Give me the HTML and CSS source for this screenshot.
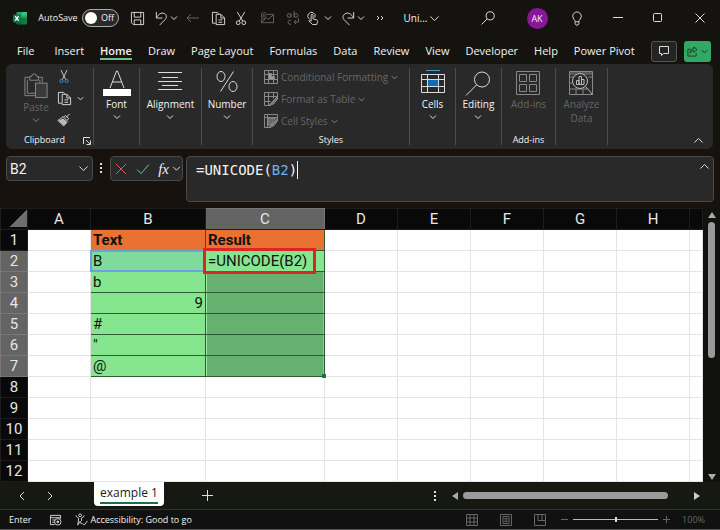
FILE: index.html
```html
<!DOCTYPE html>
<html lang="en">
<head>
  <meta charset="UTF-8">
  <meta name="viewport" content="width=device-width, initial-scale=1.0">
  <title>Uni... - Excel</title>
  <link rel="stylesheet" href="styles.css">
</head>
<body>

<!-- Shared icons -->
<svg class="sprite" aria-hidden="true">
  <symbol id="chev" viewBox="0 0 8 8"><path d="M1 2.500L4 5.500l3-3" vector-effect="non-scaling-stroke"/></symbol>
  <symbol id="copy" viewBox="0 0 16 16"><path d="M5 13H1.500V1.500H7l1.500 1.500M5.500 3.500h5l4 4v7h-9zM10.500 3.500v4h4M8 9.500h4M8 12h4"/></symbol>
  <symbol id="search" viewBox="0 0 26 26"><circle cx="17" cy="9" r="7.500" vector-effect="non-scaling-stroke"/><path d="M11.500 14.500L1 25" vector-effect="non-scaling-stroke"/></symbol>
</svg>

<header class="titlebar">
  <svg class="logo" viewBox="0 0 16 16" width="14" height="14" aria-hidden="true">
    <rect x="4" y="1" width="12" height="14" rx="1" fill="#21a366"/>
    <path d="M10 1h5a1 1 0 0 1 1 1v3h-6z" fill="#33c481"/>
    <path d="M4 8h6v7H5a1 1 0 0 1-1-1z" fill="#185c37"/>
    <path d="M10 8h6v6a1 1 0 0 1-1 1h-5z" fill="#107c41"/>
    <rect y="4" width="9" height="9" rx="1" fill="#107c41"/>
    <path d="M2.500 6l4 5M6.500 6l-4 5" stroke="#fff" stroke-width="1.500"/>
  </svg>
  <label class="autosave" for="autosave">AutoSave</label>
  <span class="toggle">
    <input type="checkbox" id="autosave">
    <span class="toggle-text">Off</span>
  </span>
  <button aria-label="Save"><svg class="icon" viewBox="0 0 16 16" width="15" height="15"><path d="M1.500 1.500h13v13h-11l-2-2zM4.500 1.500v5h7v-5M4.500 14.500v-5h7v5"/></svg></button>
  <button aria-label="Undo"><svg class="icon" viewBox="0 0 16 16" width="15" height="15"><path d="M2.500 1v6.500h6.500M2.500 7.500C5 3 8 1.500 10.500 2.500c3 1 3.500 4 1.500 6.500l-6 6"/></svg></button>
  <button aria-label="Undo list"><svg class="icon" width="8" height="8"><use href="#chev"/></svg></button>
  <button class="dim" aria-label="Back"><svg class="icon" viewBox="0 0 14 10" width="14" height="10"><path d="M13 5H1M5 1L1 5l4 4"/></svg></button>
  <button aria-label="Copy"><svg class="icon" width="15" height="15"><use href="#copy"/></svg></button>
  <button aria-label="Cut"><svg class="icon" viewBox="0 0 12 16" width="12" height="15"><path d="M2 1l6 10M10 1L4 11"/><circle cx="3" cy="12.500" r="2"/><circle cx="9" cy="12.500" r="2"/></svg></button>
  <button class="dim" aria-label="Email"><svg class="icon" viewBox="0 0 16 14" width="15" height="13"><path d="M7 2.500h7.500v9H1.500V8M6.500 6l2 2 6-5M1.500 11.500L6 7"/><path d="M3.500 2v3.500M1.500 1.500v4a2 2 0 0 0 4 0v-4a1.500 1.500 0 0 0-3 0"/></svg></button>
  <button class="dim" aria-label="Replace"><svg class="icon" viewBox="0 0 14 15" width="14" height="15"><circle cx="3" cy="4.500" r="1.800"/><path d="M5 2.500v4M8 0v6.500M5 9.500a2 2 0 1 0 0 3.500M12.500 7v4H8M10 9l-2 2 2 2"/><circle cx="10" cy="4.500" r="1.800"/></svg></button>
  <button aria-label="Touch mode"><svg class="icon" viewBox="0 0 13 16" width="12" height="15"><path d="M2.500 8.500a4 4 0 1 1 6-1.500"/><path d="M4.500 11V4.500a1 1 0 0 1 2 0V8.500l4 1c1 .5 1 1 1 2l-1 3H6L2 10.500c0-1 1-1 2.500.5"/></svg></button>
  <button aria-label="Touch options"><svg class="icon" width="8" height="8"><use href="#chev"/></svg></button>
  <button aria-label="Redo"><svg class="icon" viewBox="0 0 16 16" width="15" height="15"><path d="M13.500 1v6.500H7M13.500 7.500C11 3 8 1.500 5.500 2.500c-3 1-4.500 4-2.500 6.500l6 6"/></svg></button>
  <button aria-label="Redo list"><svg class="icon" width="8" height="8"><use href="#chev"/></svg></button>
  <button aria-label="More commands"><svg class="icon" viewBox="0 0 8 6" width="8" height="6"><path d="M1 1l2 2-2 2M5 1l2 2-2 2"/></svg></button>
  <button class="file-name">Uni... <svg class="icon" width="11" height="11"><use href="#chev"/></svg></button>
  <button aria-label="Search"><svg class="icon" width="14" height="14"><use href="#search"/></svg></button>
  <button aria-label="Account"><span class="avatar">AK</span></button>
  <button aria-label="Tips"><svg class="icon" viewBox="0 0 12 16" width="12" height="15"><path d="M4 11.500C4 9.500 1.500 8.500 1.500 5.500a4.500 4.500 0 0 1 9 0c0 3-2.500 4-2.500 6zM4 11.500v2l1 1.500h2l1-1.500v-2"/></svg></button>
  <button aria-label="Minimize"><svg class="icon" viewBox="0 0 10 10" width="10" height="10"><path d="M0 4.500h10"/></svg></button>
  <button aria-label="Maximize"><svg class="icon" viewBox="0 0 10 10" width="10" height="10"><rect x=".5" y=".5" width="8" height="8" rx="1"/></svg></button>
  <button aria-label="Close"><svg class="icon" viewBox="0 0 10 10" width="10" height="10"><path d="M.5.5l9 9M9.500.5l-9 9"/></svg></button>
</header>

<nav class="tabs">
  <a href="#file" class="file-tab">File</a>
  <a href="#insert">Insert</a>
  <a href="#home" class="active">Home</a>
  <a href="#draw">Draw</a>
  <a href="#layout">Page Layout</a>
  <a href="#formulas">Formulas</a>
  <a href="#data">Data</a>
  <a href="#review">Review</a>
  <a href="#view">View</a>
  <a href="#developer">Developer</a>
  <a href="#help">Help</a>
  <a href="#pivot">Power Pivot</a>
  <div class="tab-actions">
    <button class="comments" aria-label="Comments"><svg class="icon" viewBox="0 0 12 12" width="12" height="12"><path d="M1.500 1.500h9v7H5.500L3.500 10.500V8.500h-2z"/></svg></button>
    <button class="share" aria-label="Share">
      <svg class="icon" viewBox="0 0 12 12" width="11" height="11"><path d="M4 3.500H1v7.500h9V8M7.500 1l3.500 3-3.500 3V5C5 5 4 6 3.500 8c0-3 1-5 4-5z"/></svg>
      <svg class="icon" width="7" height="7"><use href="#chev"/></svg>
    </button>
  </div>
</nav>

<section class="ribbon" id="home">
  <div class="group">
    <div class="clipboard">
      <button class="tool muted">
        <svg class="icon" viewBox="0 0 26 28" width="26" height="27"><path d="M12 23.500H1.500v-19h5M15 4.500h4.500V10M6.500 3.500h2a2.500 2.500 0 0 1 5 0h2v4h-9zM4 7v14h8M17 7v3" /><rect x="12.500" y="10.500" width="12" height="15" fill="#3a3a3a"/></svg>
        <span>Paste</span>
        <svg class="icon" width="8" height="8"><use href="#chev"/></svg>
      </button>
      <div class="clip-tools">
        <button aria-label="Cut"><svg class="icon" viewBox="0 0 12 16" width="14" height="14"><path d="M2.500 0l5.500 11M9.500 0L4 11"/><g stroke="#3f9bdc"><circle cx="3" cy="12.500" r="1.800"/><circle cx="9" cy="12.500" r="1.800"/></g></svg></button>
        <button aria-label="Copy"><svg class="icon" width="15" height="15"><use href="#copy"/></svg><svg class="icon" width="7" height="7"><use href="#chev"/></svg></button>
        <button aria-label="Format Painter"><svg class="icon" viewBox="0 0 15 15" width="14" height="14"><path d="M13.500 1L9.500 5M6 3.500l5.500 5.500M7 4.500L9 2.500l3.500 3.500-2 2M6 4.500L1 8l6 6 4-4.500" /><path d="M2.500 8.500l5 4 2.500-3-3.500-3z" fill="#b5b5b5"/></svg></button>
      </div>
    </div>
    <h2>Clipboard</h2>
    <button class="launcher" aria-label="Clipboard options"><svg class="icon" viewBox="0 0 8 8" width="8" height="8"><path d="M.5 7V.5H7M3 3l4 4M7.500 3.500v4h-4"/></svg></button>
  </div>
  <div class="group">
    <button class="tool">
      <svg class="icon" viewBox="0 0 28 27" width="28" height="27"><path d="M7 18L13.500 1h1L21 18M9.500 12h9"/><path d="M0 19h28v7H0z" fill="#fff" stroke="none"/></svg>
      <span>Font</span>
      <svg class="icon" width="8" height="8"><use href="#chev"/></svg>
    </button>
  </div>
  <div class="group">
    <button class="tool">
      <svg class="icon" viewBox="0 0 26 27" width="26" height="27"><path d="M1 2.500h24M5 7.500h16M1 11.500h24M5 15.500h16M1 19.500h24"/></svg>
      <span>Alignment</span>
      <svg class="icon" width="8" height="8"><use href="#chev"/></svg>
    </button>
  </div>
  <div class="group">
    <button class="tool">
      <svg class="icon" viewBox="0 0 24 27" width="24" height="27"><ellipse cx="6" cy="6.500" rx="4" ry="5"/><ellipse cx="18" cy="16.500" rx="4" ry="5"/><path d="M18.500 1.500L5.500 21.500"/></svg>
      <span>Number</span>
      <svg class="icon" width="8" height="8"><use href="#chev"/></svg>
    </button>
  </div>
  <div class="group">
    <div class="style-list">
      <button>
        <svg class="icon" viewBox="0 0 14 14" width="14" height="14"><path d="M.5.5h13v13H.5zM.5 4.500h13M.5 9.500h13M4.500.5v13M9.500.5v13"/><path d="M4.500 3.500h3v3h3v3h-6z" fill="#999"/></svg>
        Conditional Formatting <svg class="icon" width="7" height="7"><use href="#chev"/></svg>
      </button>
      <button>
        <svg class="icon" viewBox="0 0 14 14" width="14" height="14"><path d="M7 13.500H.5V.5h13V5M.5 4.500h13M.5 9.500h6M4.500.5v13M9.500.5v6"/><path d="M13.500 4.500L8 10l-3 3.500 4.500-1.500 4-5z" fill="#777"/></svg>
        Format as Table <svg class="icon" width="7" height="7"><use href="#chev"/></svg>
      </button>
      <button>
        <svg class="icon" viewBox="0 0 14 14" width="14" height="14"><path d="M7 13.500H.5V.5h13V5M.5 3.500h13M3.500.5v13"/><path d="M4 4h8L6 11H4z" fill="#666"/><path d="M13.500 4.500L8 10l-3 3.500 4.500-1.500 4-5z" fill="#777"/></svg>
        Cell Styles <svg class="icon" width="7" height="7"><use href="#chev"/></svg>
      </button>
    </div>
    <h2>Styles</h2>
  </div>
  <div class="group">
    <button class="tool">
      <svg class="icon" viewBox="0 0 26 27" width="26" height="27"><path d="M6 .5h14" stroke="#3f9bdc"/><path d="M1.500 4.500h23v18h-23zM1.500 9.500h23M1.500 16.500h23M7.500 4.500v18M18.500 4.500v18"/><path d="M8 10h10v6H8z" fill="#0f6cbd" stroke="none"/></svg>
      <span>Cells</span>
      <svg class="icon" width="8" height="8"><use href="#chev"/></svg>
    </button>
  </div>
  <div class="group">
    <button class="tool">
      <svg class="icon" width="26" height="27"><use href="#search"/></svg>
      <span>Editing</span>
      <svg class="icon" width="8" height="8"><use href="#chev"/></svg>
    </button>
  </div>
  <div class="group">
    <button class="tool muted">
      <svg class="icon" viewBox="0 0 26 27" width="26" height="27"><path d="M1.500 1.500h23v23h-23zM4.500 4.500h7v7h-7zM14.500 4.500h7v7h-7zM4.500 14.500h7v7h-7zM14.500 14.500h7v7h-7z"/></svg>
      <span>Add-ins</span>
    </button>
    <h2>Add-ins</h2>
  </div>
  <div class="group">
    <button class="tool muted">
      <svg class="icon" viewBox="0 0 26 27" width="26" height="27"><path d="M1.500 1.500h23v23h-23zM1.500 7h4M20 7h4M1.500 13h4M1.500 19h18M8 19v5M15 19v5"/><path d="M1.500 2h23v2h-23z"/><g stroke="#bbb"><circle cx="12" cy="11" r="7.500" fill="#292929"/><path d="M17.500 16.500l7 8M8.500 14.500v-4h2.500v4zM11 14.500v-8h2.500v8zM13.500 14.500v-5H16v5z"/></g></svg>
      <span>Analyze<br>Data</span>
    </button>
  </div>
  <button class="collapse" aria-label="Collapse ribbon"><svg class="icon flip" width="11" height="11"><use href="#chev"/></svg></button>
</section>

<section class="formula-row">
  <div class="box name-box">
    <input type="text" value="B2" aria-label="Name box">
    <button aria-label="Names"><svg class="icon" width="11" height="11"><use href="#chev"/></svg></button>
  </div>
  <span class="dots"></span>
  <div class="box fx-box">
    <button aria-label="Cancel"><svg class="icon" viewBox="0 0 12 12" width="12" height="12"><path d="M1 1l10 10M11 1L1 11" stroke="#e0565b"/></svg></button>
    <button aria-label="Enter"><svg class="icon" viewBox="0 0 14 12" width="14" height="12"><path d="M1 6.500L5 10.500 13 1.500" stroke="#6cc785"/></svg></button>
    <button class="fx"><i>fx</i> <svg class="icon" width="9" height="9"><use href="#chev"/></svg></button>
  </div>
  <div class="box formula-box">
    <div class="formula" role="textbox" contenteditable="true" spellcheck="false" aria-label="Formula bar">=UNICODE(<span class="ref">B2</span>)<span class="caret"></span></div>
    <button aria-label="Collapse formula bar"><svg class="icon flip" width="11" height="11"><use href="#chev"/></svg></button>
  </div>
</section>

<main class="sheet">
  <table>
    <colgroup>
      <col class="col-num"><col class="col-a"><col class="col-b"><col class="col-c">
      <col class="col"><col class="col"><col class="col"><col class="col"><col class="col"><col>
    </colgroup>
    <thead>
      <tr><th class="corner"></th><th>A</th><th>B</th><th class="on">C</th><th>D</th><th>E</th><th>F</th><th>G</th><th>H</th><th></th></tr>
    </thead>
    <tbody>
      <tr><th>1</th><td></td><td class="head">Text</td><td class="head">Result</td><td></td><td></td><td></td><td></td><td></td><td></td></tr>
      <tr><th class="on">2</th><td></td><td class="fill ref-cell">B</td><td class="fill edit-cell">=UNICODE(B2)</td><td></td><td></td><td></td><td></td><td></td><td></td></tr>
      <tr><th class="on">3</th><td></td><td class="fill">b</td><td class="fill sel"></td><td></td><td></td><td></td><td></td><td></td><td></td></tr>
      <tr><th class="on">4</th><td></td><td class="fill number">9</td><td class="fill sel"></td><td></td><td></td><td></td><td></td><td></td><td></td></tr>
      <tr><th class="on">5</th><td></td><td class="fill">#</td><td class="fill sel"></td><td></td><td></td><td></td><td></td><td></td><td></td></tr>
      <tr><th class="on">6</th><td></td><td class="fill">"</td><td class="fill sel"></td><td></td><td></td><td></td><td></td><td></td><td></td></tr>
      <tr><th class="on">7</th><td></td><td class="fill">@</td><td class="fill sel last"></td><td></td><td></td><td></td><td></td><td></td><td></td></tr>
      <tr><th>8</th><td></td><td></td><td></td><td></td><td></td><td></td><td></td><td></td><td></td></tr>
      <tr><th>9</th><td></td><td></td><td></td><td></td><td></td><td></td><td></td><td></td><td></td></tr>
      <tr><th>10</th><td></td><td></td><td></td><td></td><td></td><td></td><td></td><td></td><td></td></tr>
      <tr><th>11</th><td></td><td></td><td></td><td></td><td></td><td></td><td></td><td></td><td></td></tr>
      <tr><th>12</th><td></td><td></td><td></td><td></td><td></td><td></td><td></td><td></td><td></td></tr>
    </tbody>
  </table>
  <div class="vscroll">
    <svg viewBox="0 0 8 6" width="8" height="6"><path d="M4 0l4 6H0z" fill="#aaa"/></svg>
    <span class="thumb"></span>
    <svg viewBox="0 0 8 6" width="8" height="6"><path d="M4 6l4-6H0z" fill="#aaa"/></svg>
  </div>
</main>

<section class="sheet-tabs">
  <button class="arrow" aria-label="Previous sheet"><svg class="icon" viewBox="0 0 6 10" width="6" height="10"><path d="M5 1L1 5l4 4"/></svg></button>
  <button class="arrow" aria-label="Next sheet"><svg class="icon" viewBox="0 0 6 10" width="6" height="10"><path d="M1 1l4 4-4 4"/></svg></button>
  <button class="sheet-tab"><span>example 1</span></button>
  <button class="add" aria-label="New sheet"><svg class="icon" viewBox="0 0 11 11" width="11" height="11"><path d="M5.500 0v11M0 5.500h11"/></svg></button>
  <span class="dots"></span>
  <div class="hscroll">
    <svg viewBox="0 0 6 8" width="6" height="8"><path d="M6 0v8L0 4z" fill="#aaa"/></svg>
    <span class="thumb"></span>
    <svg viewBox="0 0 6 8" width="6" height="8"><path d="M0 0v8l6-4z" fill="#ccc"/></svg>
  </div>
</section>

<footer class="status">
  <span>Enter</span>
  <svg class="icon" viewBox="0 0 14 13" width="13" height="12"><path d="M6 11.500H1.500V1.500h11V5M1.500 4h11M3.500 6.500h3M3.500 9h2"/><circle cx="9.500" cy="8.500" r="3.500"/><circle cx="9.500" cy="8.500" r="1" fill="#ddd"/></svg>
  <button class="access"><svg class="icon" viewBox="0 0 14 14" width="13" height="13"><circle cx="5.500" cy="2.500" r="1.500"/><path d="M1 2.500c0 2 3 2.500 3 3l-1 7.500 2.500-4 1.500 3M10 2.500c0 2-3 2.500-3 3v3M8 11l2 2 3.500-4.500"/></svg>Accessibility: Good to go</button>
  <div class="views">
    <button aria-label="Normal view"><svg class="icon" viewBox="0 0 12 12" width="12" height="12"><path d="M.5.5h11v11H.5zM.5 4h11M.5 8h11M4 .5v11M8 .5v11"/></svg></button>
    <button aria-label="Page layout view"><svg class="icon" viewBox="0 0 12 12" width="12" height="12"><path d="M.5.5h11v11H.5zM3 2.500h6v7H3zM4.500 4.500h3M4.500 6h3M4.500 7.500h3"/></svg></button>
    <button aria-label="Page break view"><svg class="icon" viewBox="0 0 12 12" width="12" height="12"><path d="M.5.5h11v11H.5zM4 .5v6h4v-6M8 6.500h3.500"/></svg></button>
  </div>
  <div class="zoom">
    <button aria-label="Zoom out"><svg class="icon" viewBox="0 0 7 7" width="7" height="7"><path d="M0 3.500h7"/></svg></button>
    <input type="range" min="0" max="100" value="50" aria-label="Zoom">
    <button aria-label="Zoom in"><svg class="icon" viewBox="0 0 7 7" width="7" height="7"><path d="M0 3.500h7M3.500 0v7"/></svg></button>
    <span>100%</span>
  </div>
</footer>

</body>
</html>
```
FILE: styles.css
```css
/* General Styles */
* {
  box-sizing: border-box;
}
body {
  margin: 0;
  font-family: "Open Sans", "Noto Sans", sans-serif;
  font-size: 11px;
  line-height: 14px;
  color: #f2f2f2;
  background-color: #141310;
}
button {
  display: flex;
  align-items: center;
  justify-content: center;
  margin: 0;
  padding: 0;
  border: none;
  background: none;
  color: inherit;
  font: inherit;
}
.sprite {
  position: absolute;
  width: 0;
  height: 0;
}
.icon {
  display: block;
  flex: none;
  fill: none;
  stroke: #dcdcdc;
  stroke-width: 1;
}
.flip {
  transform: rotate(180deg);
}
.dim .icon {
  stroke: #666;
}
.dots {
  width: 2px;
  height: 10px;
  background: repeating-linear-gradient(#ddd 0 2px, transparent 2px 4px);
}

/* Title bar */
.titlebar {
  display: grid;
  grid-template-columns: 39px 38px 47px 26px 22px 4px 34px 16px 30px 22px 30px 10px 20px 20px 6px 32px 52px 1fr 20px 60px 21px 60px 23px;
  align-items: center;
  justify-items: center;
  height: 36px;
  padding-right: 9px;
}
.autosave {
  font-size: 9px;
}
.toggle {
  display: flex;
  align-items: center;
  width: 37px;
  height: 18px;
  padding: 0 2px;
  gap: 4px;
  border: 1px solid #aaa;
  border-radius: 9px;
  background-color: #292929;
  font-size: 9px;
}
.toggle input {
  appearance: none;
  flex: none;
  width: 12px;
  height: 12px;
  margin: 0;
  border-radius: 50%;
  background-color: #fff;
}
.file-name {
  gap: 2px;
  font-size: 10px;
}
.avatar {
  width: 21px;
  height: 21px;
  border-radius: 50%;
  background-color: #881798;
  font-size: 9px;
  line-height: 21px;
}

/* Ribbon tabs */
.tabs {
  display: flex;
  align-items: center;
  gap: 16px;
  height: 28px;
  padding: 2px 10px 0 17px;
  white-space: nowrap;
}
.tabs a {
  padding-top: 2px;
  border-bottom: 2px solid transparent;
  color: #f2f2f2;
  text-decoration: none;
}
.tabs .file-tab {
  margin-right: 4px;
}
.tabs a.active {
  border-color: #6cc08b;
  font-weight: 600;
}
.tab-actions {
  display: flex;
  gap: 7px;
  margin-left: auto;
}
.comments {
  width: 26px;
  height: 21px;
  border: 1px solid #555;
  border-radius: 3px;
  background-color: #242424;
}
.share {
  gap: 3px;
  width: 27px;
  height: 21px;
  border-radius: 3px;
  background-color: #31a863;
}
.share .icon {
  stroke: #123a22;
}

/* Ribbon */
.ribbon {
  display: grid;
  grid-template-columns: 88px 46px 62px 51px 157px 46px 46px 54px 52px 1fr;
  height: 85px;
  margin: 0 7px 0 6px;
  border-radius: 6px;
  background-color: #292929;
  font-size: 10px;
}
.group {
  position: relative;
  display: flex;
  flex-direction: column;
  align-items: center;
  justify-content: space-between;
  margin: 4px 0;
  padding-top: 2px;
  border-right: 1px solid #4c4c4c;
}
.group h2 {
  margin: 0;
  font-size: 9px;
  font-weight: normal;
  line-height: 10px;
}
.tool {
  flex-direction: column;
}
.tool span {
  margin: 0 0 2px;
}
.muted {
  color: #666;
}
.muted .icon {
  stroke: #888;
}
.clipboard {
  display: flex;
  align-self: stretch;
  gap: 8px;
  padding-left: 17px;
}
.clipboard + h2 {
  margin-right: 10px;
}
.clip-tools {
  display: flex;
  flex-direction: column;
  align-items: flex-start;
  gap: 7px;
}
.clip-tools button {
  gap: 5px;
}
.launcher {
  position: absolute;
  right: 2px;
  bottom: 0;
}
.style-list {
  display: flex;
  flex-direction: column;
  align-self: stretch;
  gap: 8px;
  padding: 0 0 0 11px;
  color: #666;
}
.style-list button {
  justify-content: flex-start;
  gap: 3px;
  white-space: nowrap;
}
.style-list .icon {
  stroke: #888;
}
.collapse {
  place-self: end;
  padding: 0 9px 3px 0;
}

/* Formula bar */
.formula-row {
  display: flex;
  align-items: flex-start;
  height: 59px;
  padding: 7px 6px 0;
  background-color: #17120e;
}
.box {
  display: flex;
  align-items: center;
  height: 25px;
  border: 1px solid #4a4a4a;
  border-radius: 4px;
  background-color: #292929;
}
.name-box {
  width: 87px;
  padding: 0 3px;
}
.name-box input {
  flex: 1;
  min-width: 0;
  padding: 0;
  border: none;
  background: none;
  color: #f2f2f2;
  font-family: Roboto, sans-serif;
  font-size: 14px;
}
.formula-row .dots {
  margin: 7px 8px 0 7px;
}
.fx-box {
  width: 73px;
  justify-content: space-between;
  padding: 0 1px 0 4px;
}
.fx {
  gap: 3px;
  font-family: "Liberation Serif", serif;
  font-size: 15px;
}
.formula-box {
  flex: 1;
  align-items: flex-start;
  justify-content: space-between;
  height: 46px;
  margin-left: 3px;
  padding: 4px 3px 0 9px;
}
.formula {
  outline: none;
  font-family: "DejaVu Sans Mono", monospace;
  font-size: 14px;
  line-height: 18px;
}
.ref {
  color: #6cb2ee;
}
.caret {
  display: inline-block;
  height: 18px;
  border-left: 1px solid #fff;
  vertical-align: top;
}

/* Worksheet */
.sheet {
  display: flex;
}
table {
  flex: 1;
  width: 0;
  table-layout: fixed;
  border-collapse: collapse;
  background-color: #fff;
  color: #111;
  font-family: Roboto, sans-serif;
  font-size: 15px;
  line-height: 18px;
}
.col-num { width: 27px; }
.col-a { width: 63px; }
.col-b { width: 115px; }
.col-c { width: 119px; }
.col { width: 73px; }
th,
td {
  position: relative;
  height: 21px;
  padding: 0 2px;
  border: 1px solid #e4e4e4;
}
th {
  padding: 0;
  border-color: #1c1c1c;
  background-color: #090909;
  color: #e6e6e6;
  font-weight: normal;
}
th.on {
  border-color: #777;
  background-color: #646464;
}
thead th.on {
  border-bottom-color: #1c1c1c;
}
.corner {
  background: linear-gradient(135deg, transparent 50%, #6e6e6e 50%) no-repeat 9px 1px / 17px 17px #090909;
}
.head,
.fill {
  border-color: #2f5a35;
}
.head {
  background-color: #e97132;
  font-weight: bold;
}
.fill {
  background-color: #86e58f;
}
.number {
  text-align: right;
}
.sel {
  background-color: #66b070;
  box-shadow: inset 1px 0 #a5e6ad, inset -1px 0 #8fc99a;
}
.ref-cell {
  background-color: #7fdb9c;
}
.ref-cell::after {
  content: "";
  position: absolute;
  inset: -1px;
  border: 2px solid #6f9fdc;
}
.edit-cell::after {
  content: "";
  position: absolute;
  z-index: 1;
  inset: -3px 8px -3px -3px;
  border: 3px solid #dc2626;
}
.last::after {
  content: "";
  position: absolute;
  right: -2px;
  bottom: -2px;
  width: 4px;
  height: 4px;
  background-color: #107c41;
}
.vscroll {
  display: flex;
  flex-direction: column;
  align-items: center;
  width: 17px;
  padding: 4px 0 2px;
  background-color: #111110;
}
.vscroll .thumb {
  width: 7px;
  height: 136px;
  margin: 4px 0 auto;
  border-radius: 4px;
  background-color: #9a9a9a;
}

/* Sheet tabs */
.sheet-tabs {
  display: flex;
  align-items: center;
  height: 27px;
  padding: 0 20px 0 18px;
  background-color: #161812;
}
.arrow {
  width: 8px;
  margin-right: 20px;
}
.sheet-tab {
  align-self: flex-start;
  height: 24px;
  margin-left: 20px;
  padding: 0 6px;
  border-radius: 0 0 4px 4px;
  background-color: #fff;
  color: #222;
  font-size: 12px;
  line-height: 18px;
}
.sheet-tab span {
  border-bottom: 2px solid #1e6e48;
}
.add {
  margin: 0 auto 0 38px;
}
.hscroll {
  display: flex;
  align-items: center;
  width: 248px;
  margin-left: 16px;
}
.hscroll .thumb {
  width: 205px;
  height: 7px;
  margin: 0 auto 0 5px;
  border-radius: 4px;
  background-color: #9a9a9a;
}

/* Status bar */
.status {
  display: flex;
  align-items: center;
  height: 21px;
  padding: 0 15px 0 9px;
  border-top: 1px solid #333;
  border-bottom: 1px solid #555;
  background-color: #111;
  font-size: 9px;
}
.status span {
  margin-right: 18px;
}
.access {
  gap: 2px;
  margin-left: 13px;
}
.views {
  display: flex;
  gap: 22px;
  margin-left: auto;
}
.views .icon,
.zoom button .icon {
  stroke: #666;
}
.zoom {
  display: flex;
  align-items: center;
  gap: 5px;
  margin-left: 15px;
  color: #666;
}
.status .zoom span {
  margin: 0 0 0 7px;
}
.zoom input {
  appearance: none;
  width: 85px;
  height: 1px;
  margin: 0;
  background-color: #bbb;
}
.zoom input::-webkit-slider-thumb {
  appearance: none;
  width: 2px;
  height: 5px;
  background-color: #ddd;
}
```
